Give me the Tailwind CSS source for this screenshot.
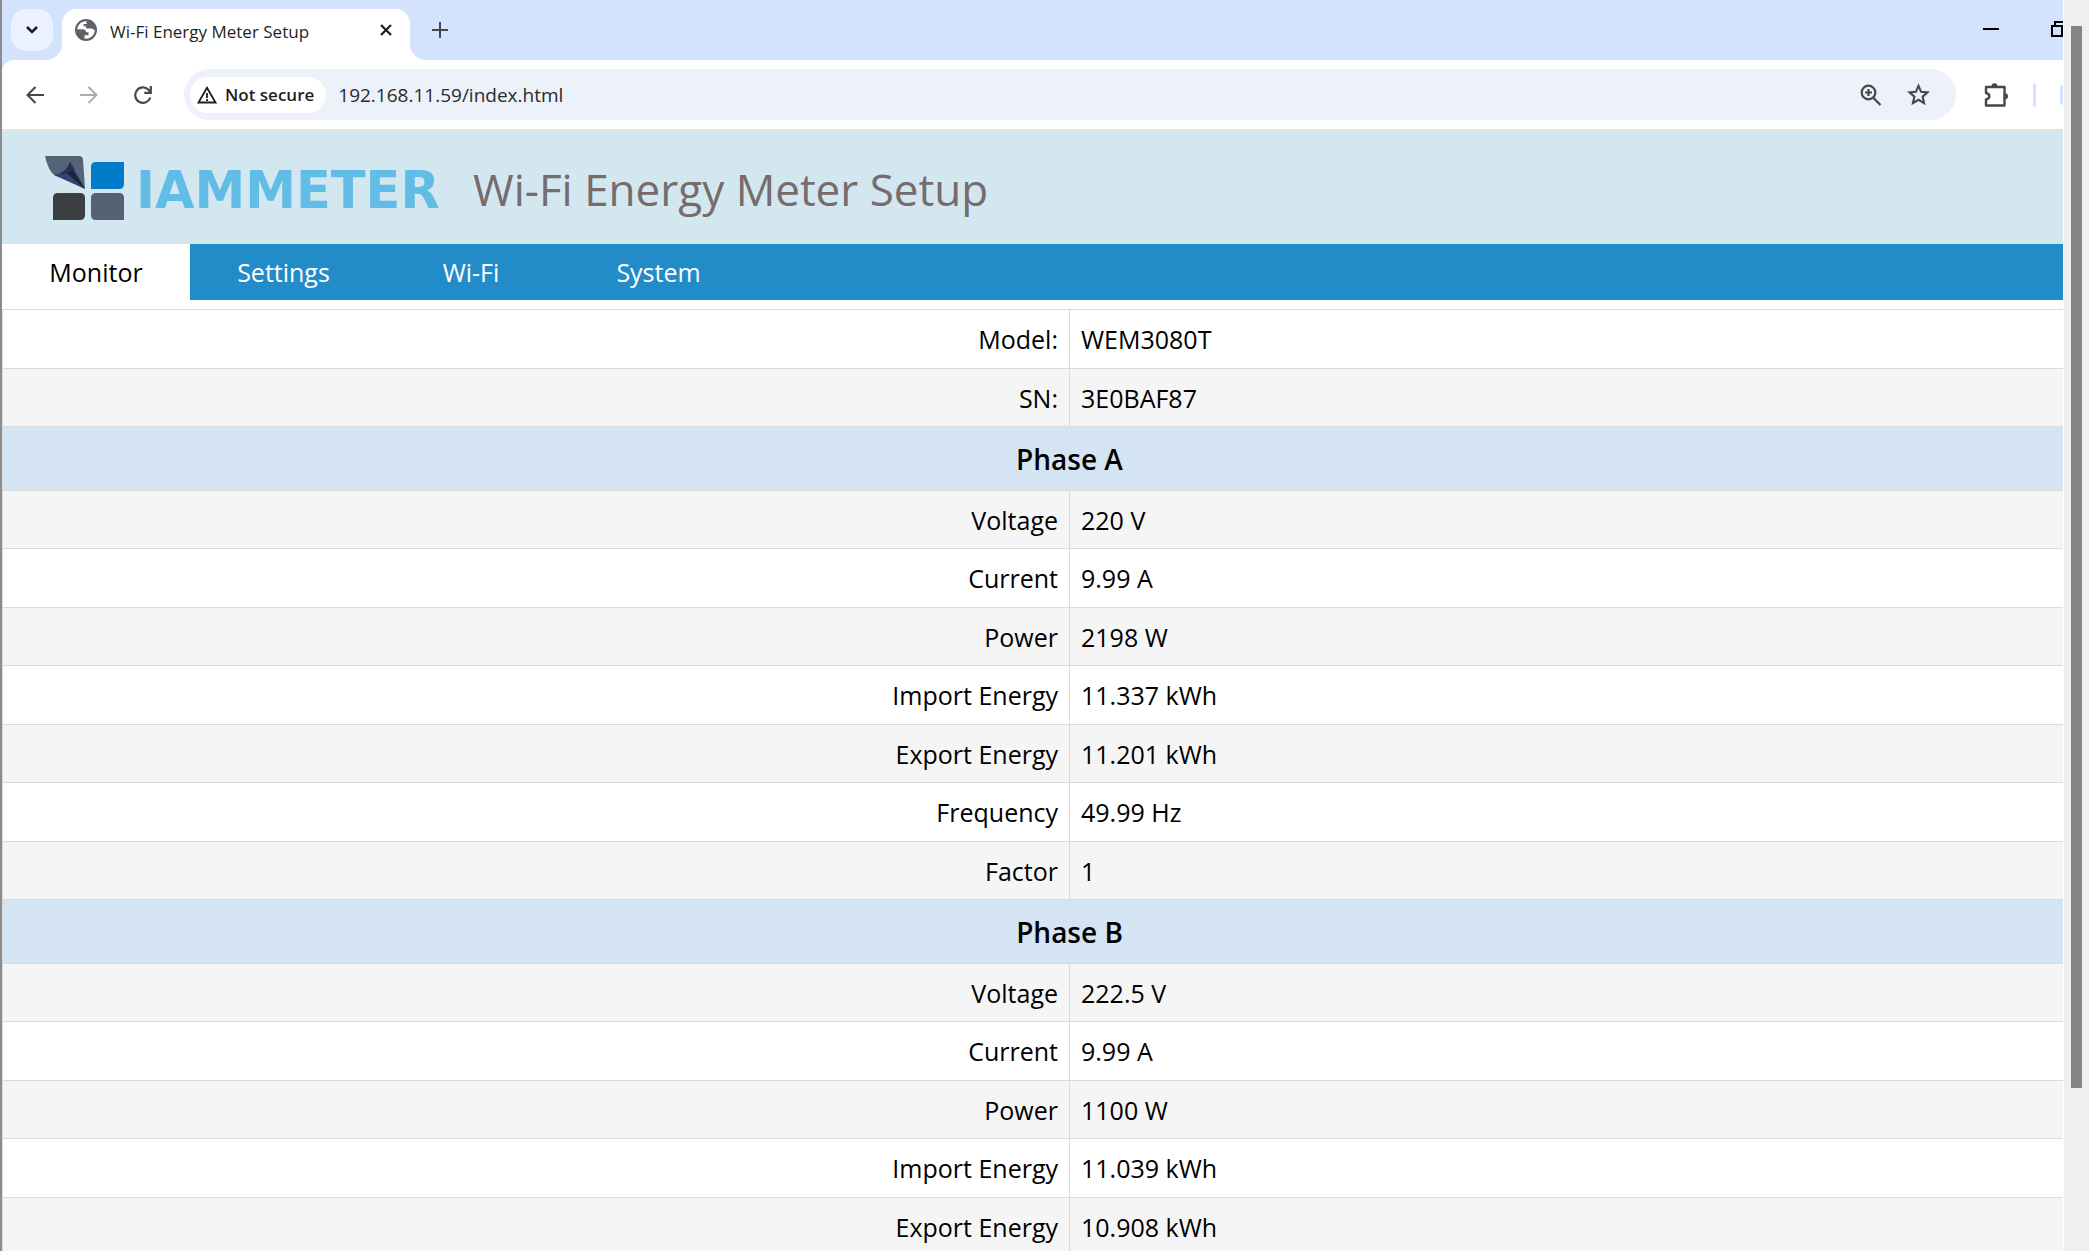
<!DOCTYPE html>
<html lang="en">
<head>
<meta charset="utf-8">
<title>Wi-Fi Energy Meter Setup</title>
<script src="https://cdn.jsdelivr.net/npm/@tailwindcss/browser@4"></script>
</head>
<body class="flex h-screen overflow-hidden bg-white font-['Open_Sans','Noto_Sans',sans-serif] text-black">
  <div class="w-[2px] shrink-0 bg-[#8c8c8c]"></div>

  <div class="flex min-w-0 flex-1 flex-col overflow-hidden">
    <!-- Tab strip -->
    <div class="flex h-[60px] shrink-0 bg-[#d3e3fd]">
      <button aria-label="Search tabs" class="mt-[9px] ml-[9px] flex h-[42px] w-[42px] shrink-0 items-center justify-center rounded-[15px] bg-[#ebf1fe]">
        <svg class="h-3 w-3" viewBox="0 0 12 12" fill="none" stroke="#1f1f1f" stroke-width="2.6"><path d="M1 3l5 5 5-5"/></svg>
      </button>
      <svg class="ml-[-7px] h-4 w-4 shrink-0 self-end" viewBox="0 0 16 16"><path d="M0 16A16 16 0 0 0 16 0V16Z" fill="#fff"/></svg>
      <div class="mt-[9px] flex w-[348px] shrink-0 items-start rounded-t-[15px] bg-white pt-[9px] pr-[18px] pl-[13px]">
        <svg class="mt-px h-[22px] w-[22px] shrink-0" viewBox="0 0 22 22"><circle cx="11" cy="11" r="11" fill="#5f6368"/><path d="M11.500 2.200C7 1.800 2.700 5.500 2.300 10.300H7.500C9.800 10.300 11 11.500 11 13.200H13.500V16.300H9.500V19.600C15.500 20.500 19.800 15.500 19.700 11.200 18.500 10.800 18.200 9.600 16.300 9.600H13C11.500 9.600 10.700 8.600 10.800 7.200H8.500V5H11.500Z" fill="#fff"/></svg>
        <span class="ml-[13px] flex-1 text-[17px] leading-[27px] whitespace-nowrap text-[#1f1f1f]">Wi-Fi Energy Meter Setup</span>
        <button aria-label="Close tab" class="mt-[6px]"><svg class="h-3 w-3" viewBox="0 0 12 12" fill="none" stroke="#1f1f1f" stroke-width="2.2"><path d="M1 1l10 10M11 1L1 11"/></svg></button>
      </div>
      <svg class="h-4 w-4 shrink-0 self-end" viewBox="0 0 16 16"><path d="M16 16A16 16 0 0 1 0 0V16Z" fill="#fff"/></svg>
      <button aria-label="New tab" class="ml-[6px] h-[60px] shrink-0"><svg class="h-4 w-4" viewBox="0 0 16 16" fill="none" stroke="#474747" stroke-width="2"><path d="M8 0v16M0 8h16"/></svg></button>
      <div class="ml-auto flex h-[58px] items-center gap-[52px]">
        <button aria-label="Minimize"><svg class="h-4 w-4" viewBox="0 0 16 16"><path d="M0 7h16v2H0z"/></svg></button>
        <button aria-label="Restore"><svg class="h-4 w-3" viewBox="0 0 12 16" fill="none" stroke="#000" stroke-width="2"><path d="M1 5h10v10H1zM4 5V1h8"/></svg></button>
      </div>
    </div>

    <!-- Toolbar -->
    <div class="shrink-0 bg-[#d3e3fd]">
      <div class="flex h-[69px] items-center rounded-tl-xl bg-white">
        <button aria-label="Back" class="ml-6"><svg class="h-[18px] w-[18px]" viewBox="0 0 18 18" fill="none" stroke="#474747" stroke-width="2"><path d="M9.500 1L1.500 9l8 8M1.500 9H18"/></svg></button>
        <button aria-label="Forward" class="ml-9"><svg class="h-[18px] w-[18px]" viewBox="0 0 18 18" fill="none" stroke="#ababab" stroke-width="2"><path d="M8.500 1l8 8-8 8M16.500 9H0"/></svg></button>
        <button aria-label="Reload" class="ml-9"><svg class="h-5 w-[18px]" viewBox="0 0 18 20" fill="none" stroke="#474747" stroke-width="2.200"><path d="M16.300 12.500A7.700 7.700 0 1 1 14.500 4.800L16.500 7"/><path d="M16.800 1v6.800h-6.500"/></svg></button>
        <div class="ml-8 flex h-[51px] flex-1 items-center rounded-full bg-[#edf1fa] pr-[26px] pl-[6px]">
          <button class="flex h-9 items-center rounded-full bg-white pr-3 pl-[7px] text-[17px] font-semibold whitespace-nowrap text-[#1f1f1f]">
            <svg class="mr-2 h-[18px] w-5" viewBox="0 0 20 18" fill="none" stroke="#1f1f1f" stroke-width="1.800"><path d="M10 1.800L1.500 16.500h17ZM10 7v5M10 13v2"/></svg>
            Not secure
          </button>
          <input aria-label="Address" value="192.168.11.59/index.html" class="ml-3 min-w-0 flex-1 bg-transparent text-[19px] leading-7 text-[#2b2b2b] outline-none">
          <button aria-label="Zoom"><svg class="h-[22px] w-[22px]" viewBox="0 0 22 22" fill="none" stroke="#474747" stroke-width="2.200"><circle cx="8.500" cy="8.500" r="6.800"/><path d="M13 13.500l7.500 7.500M8.500 5v7M5 8.500h7"/></svg></button>
          <button aria-label="Bookmark" class="ml-[25px]"><svg class="h-[23px] w-[23px]" viewBox="0 0 24 24" fill="none" stroke="#474747" stroke-width="2.200"><path d="M12 3l2.700 6.200 6.700.6-5.100 4.500 1.500 6.700L12 17.500 6.200 21l1.500-6.700-5.100-4.500 6.700-.6Z"/></svg></button>
        </div>
        <button aria-label="Extensions" class="ml-[28px]"><svg class="h-6 w-6" viewBox="0 0 24 24"><path d="M2 4h18.500v18.500H2v-6c4.500-1 4.500-5.500 0-6.500Z" fill="none" stroke="#474747" stroke-width="2.400" stroke-linejoin="round"/><path d="M7.500 3.500a3 3.200 0 0 1 6 0ZM21 10.200a3 3 0 0 1 0 6Z" fill="#474747"/></svg></button>
        <div class="ml-[25px] h-6 w-[3px] rounded bg-[#d3e3fd]"></div>
        <div class="ml-6 h-5 w-[3px] rounded-l-full bg-[#d3e3fd]"></div>
      </div>
    </div>

    <!-- Device page -->
    <header class="flex h-[115px] shrink-0 items-center border-t-[3px] border-[#e0e4e2] bg-[#d3e7f1] pl-[43px]">
      <svg class="h-16 w-[79px] shrink-0" viewBox="0 0 79 64">
        <path d="M0 0H34Q38 0 38 4L40 33 24 24 9 19Q3 14 0 0Z" fill="#546375"/>
        <path d="M9 19Q21 18 25 6L40 33Z" fill="#2f4573"/>
        <path d="M9 19Q21 18 25 6L30 14 20 18Z" fill="#253253"/>
        <path d="M28 14L40 33 22 17Z" fill="#1b2233"/>
        <path d="M51 6H79V28Q79 33 74 33H46V11Q46 6 51 6Z" fill="#007bca"/>
        <path d="M13 37H35Q40 37 40 42V59Q40 64 35 64H8V42Q8 37 13 37Z" fill="#3b3f42"/>
        <path d="M51 37H74Q79 37 79 42V64H51Q46 64 46 59V42Q46 37 51 37Z" fill="#566173"/>
      </svg>
      <span class="ml-3 w-[304px] shrink-0 pt-1 font-['DejaVu_Sans',sans-serif] text-[51px] leading-none font-bold text-[#61bde5]">IAMMETER</span>
      <h1 class="ml-[33px] pt-[2px] text-[44px] leading-none whitespace-nowrap text-[#766c6c]">Wi-Fi Energy Meter Setup</h1>
    </header>
    <nav class="flex h-14 shrink-0 bg-[#228cc9] text-[25px] text-white">
      <a href="#" class="flex w-[188px] items-center justify-center bg-white pt-[2px] text-black">Monitor</a>
      <a href="#" class="flex w-[187px] items-center justify-center pt-[2px]">Settings</a>
      <a href="#" class="flex w-[188px] items-center justify-center pt-[2px]">Wi-Fi</a>
      <a href="#" class="flex w-[187px] items-center justify-center pt-[2px]">System</a>
    </nav>

    <table class="mt-[9px] w-[calc(100%+74px)] table-fixed border-collapse text-[25px] leading-8 [&_td]:border [&_td]:border-[#dadada] [&_td]:px-[11px] [&_td]:py-0 [&_th]:border [&_th]:border-[#dadada]">
      <tbody>
        <tr class="h-[59px]"><td class="w-1/2 text-right">Model:</td><td>WEM3080T</td></tr>
        <tr class="h-[58px] bg-[#f5f5f5]"><td class="text-right">SN:</td><td>3E0BAF87</td></tr>
        <tr class="h-16 bg-[#d5e4f3]"><th colspan="2" class="text-[28px] font-semibold">Phase A</th></tr>
        <tr class="h-[58px] bg-[#f5f5f5]"><td class="text-right">Voltage</td><td>220 V</td></tr>
        <tr class="h-[59px]"><td class="text-right">Current</td><td>9.99 A</td></tr>
        <tr class="h-[58px] bg-[#f5f5f5]"><td class="text-right">Power</td><td>2198 W</td></tr>
        <tr class="h-[59px]"><td class="text-right">Import Energy</td><td>11.337 kWh</td></tr>
        <tr class="h-[58px] bg-[#f5f5f5]"><td class="text-right">Export Energy</td><td>11.201 kWh</td></tr>
        <tr class="h-[59px]"><td class="text-right">Frequency</td><td>49.99 Hz</td></tr>
        <tr class="h-[58px] bg-[#f5f5f5]"><td class="text-right">Factor</td><td>1</td></tr>
        <tr class="h-16 bg-[#d5e4f3]"><th colspan="2" class="text-[28px] font-semibold">Phase B</th></tr>
        <tr class="h-[58px] bg-[#f5f5f5]"><td class="text-right">Voltage</td><td>222.5 V</td></tr>
        <tr class="h-[59px]"><td class="text-right">Current</td><td>9.99 A</td></tr>
        <tr class="h-[58px] bg-[#f5f5f5]"><td class="text-right">Power</td><td>1100 W</td></tr>
        <tr class="h-[59px]"><td class="text-right">Import Energy</td><td>11.039 kWh</td></tr>
        <tr class="h-[58px] bg-[#f5f5f5]"><td class="text-right">Export Energy</td><td>10.908 kWh</td></tr>
      </tbody>
    </table>
  </div>

  <!-- Scroll bar -->
  <div class="ml-px w-[25px] shrink-0 bg-[#efefef] pt-[26px] pl-[7px]">
    <div class="h-[calc(87%-4px)] w-[11px] bg-[#858585]"></div>
  </div>
</body>
</html>
